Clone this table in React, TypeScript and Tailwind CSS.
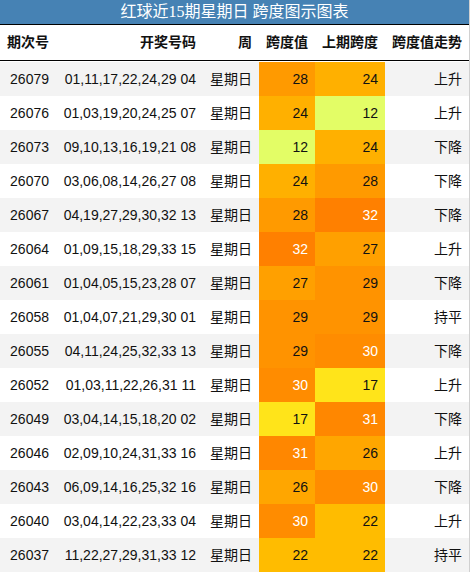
import React from "react";

type Row = {
  issue: string;
  balls: string;
  week: string;
  span: number;
  prev: number;
  trend: string;
};

const rows: Row[] = [
  { issue: "26079", balls: "01,11,17,22,24,29 04", week: "星期日", span: 28, prev: 24, trend: "上升" },
  { issue: "26076", balls: "01,03,19,20,24,25 07", week: "星期日", span: 24, prev: 12, trend: "上升" },
  { issue: "26073", balls: "09,10,13,16,19,21 08", week: "星期日", span: 12, prev: 24, trend: "下降" },
  { issue: "26070", balls: "03,06,08,14,26,27 08", week: "星期日", span: 24, prev: 28, trend: "下降" },
  { issue: "26067", balls: "04,19,27,29,30,32 13", week: "星期日", span: 28, prev: 32, trend: "下降" },
  { issue: "26064", balls: "01,09,15,18,29,33 15", week: "星期日", span: 32, prev: 27, trend: "上升" },
  { issue: "26061", balls: "01,04,05,15,23,28 07", week: "星期日", span: 27, prev: 29, trend: "下降" },
  { issue: "26058", balls: "01,04,07,21,29,30 01", week: "星期日", span: 29, prev: 29, trend: "持平" },
  { issue: "26055", balls: "04,11,24,25,32,33 13", week: "星期日", span: 29, prev: 30, trend: "下降" },
  { issue: "26052", balls: "01,03,11,22,26,31 11", week: "星期日", span: 30, prev: 17, trend: "上升" },
  { issue: "26049", balls: "03,04,14,15,18,20 02", week: "星期日", span: 17, prev: 31, trend: "下降" },
  { issue: "26046", balls: "02,09,10,24,31,33 16", week: "星期日", span: 31, prev: 26, trend: "上升" },
  { issue: "26043", balls: "06,09,14,16,25,32 16", week: "星期日", span: 26, prev: 30, trend: "下降" },
  { issue: "26040", balls: "03,04,14,22,23,33 04", week: "星期日", span: 30, prev: 22, trend: "上升" },
  { issue: "26037", balls: "11,22,27,29,31,33 12", week: "星期日", span: 22, prev: 22, trend: "持平" },
];

// heat colours per span value
const heat: Record<number, string> = {
  12: "bg-[#e3fd66] text-[#111]",
  17: "bg-[#ffe41a] text-[#111]",
  22: "bg-[#ffbc00] text-[#111]",
  24: "bg-[#ffb000] text-[#111]",
  26: "bg-[#ffa600] text-[#111]",
  27: "bg-[#ffa000] text-[#111]",
  28: "bg-[#ff9a00] text-[#111]",
  29: "bg-[#ff9300] text-[#111]",
  30: "bg-[#ff8c00] text-white",
  31: "bg-[#ff8700] text-white",
  32: "bg-[#ff8000] text-white",
};

const font = { fontFamily: '"Liberation Sans", "Noto Sans CJK SC", sans-serif' };
const cell = "flex h-[34px] items-center justify-end whitespace-nowrap pr-[7px]";
const head = "flex items-center justify-end whitespace-nowrap pr-[7px]";
const grid = "grid grid-cols-[56px_147px_56px_56px_70px_84px]";

export default function App() {
  return (
    <div className="w-[470px] bg-white text-[14px] text-[#111]" style={font}>
      <div className="border-r border-r-[#d0d0d0]">
        <div
          className="flex h-[24px] items-center justify-center whitespace-nowrap bg-[#4682b4] text-[16px] text-white"
          style={{ fontFamily: '"Liberation Serif", "Noto Sans CJK SC", sans-serif' }}
        >
          红球近15期星期日 跨度图示图表
        </div>
        <div className="border-y border-black">
          <div className={`${grid} h-[35px] text-[14px] font-bold`}>
            <div className={head}>期次号</div>
            <div className={head}>开奖号码</div>
            <div className={head}>周</div>
            <div className={head}>跨度值</div>
            <div className={head}>上期跨度</div>
            <div className={head}>跨度值走势</div>
          </div>
        </div>
        <div className="pt-px">
          {rows.map((r, i) => (
            <div key={r.issue} className={`${grid} ${i % 2 === 0 ? "bg-[#f3f3f3]" : "bg-white"}`}>
              <div className={cell}>{r.issue}</div>
              <div className={cell}>{r.balls}</div>
              <div className={cell}>{r.week}</div>
              <div className={`${cell} ${heat[r.span]}`}>{r.span}</div>
              <div className={`${cell} ${heat[r.prev]}`}>{r.prev}</div>
              <div className={cell}>{r.trend}</div>
            </div>
          ))}
        </div>
      </div>
    </div>
  );
}
